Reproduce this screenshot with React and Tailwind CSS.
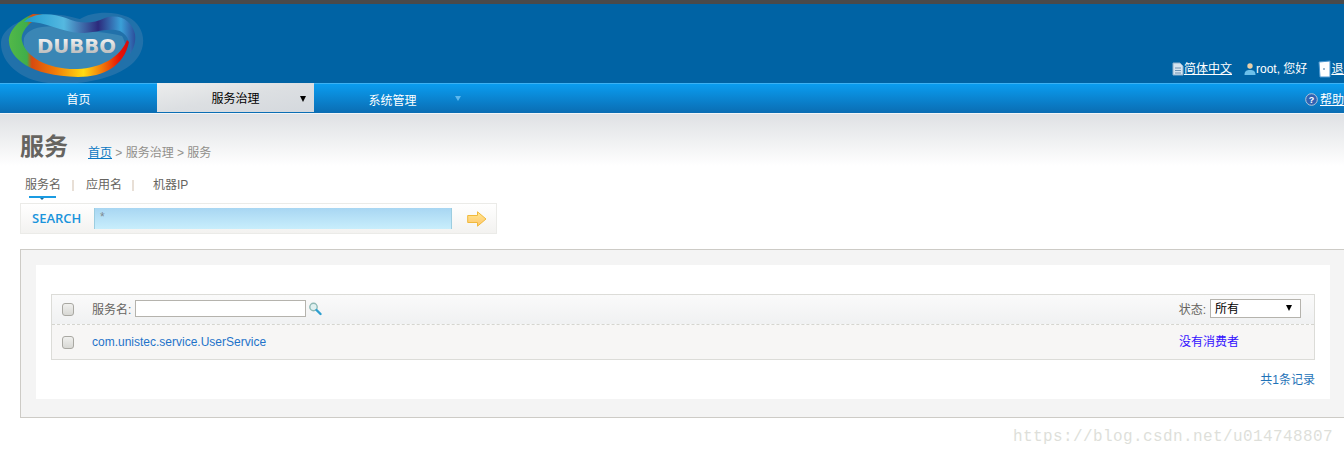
import React from 'react';

const cjk = '"Liberation Sans", "Noto Sans CJK SC", sans-serif';

const Logo = () => (
  <svg width="148" height="80" viewBox="0 0 148 80" className="absolute left-0 top-0">
    <defs>
      <linearGradient id="ring" x1="9" y1="0" x2="129" y2="0" gradientUnits="userSpaceOnUse">
        <stop offset="0" stopColor="#52b848" />
        <stop offset="0.15" stopColor="#3fae4a" />
        <stop offset="0.19" stopColor="#d84a10" />
        <stop offset="0.38" stopColor="#f07a08" />
        <stop offset="0.62" stopColor="#ffdc10" />
        <stop offset="0.8" stopColor="#f06808" />
        <stop offset="0.92" stopColor="#e81206" />
        <stop offset="1" stopColor="#d80a0a" />
      </linearGradient>
      <linearGradient id="band" x1="24" y1="0" x2="138" y2="0" gradientUnits="userSpaceOnUse">
        <stop offset="0" stopColor="#1d9ad0" />
        <stop offset="0.35" stopColor="#55b8e0" />
        <stop offset="0.65" stopColor="#2c2a7c" />
        <stop offset="0.85" stopColor="#3aa0d8" />
        <stop offset="1" stopColor="#2a3f90" />
      </linearGradient>
      <linearGradient id="word" x1="0" y1="0" x2="0" y2="1">
        <stop offset="0" stopColor="#ffffff" />
        <stop offset="1" stopColor="#b0b0b0" />
      </linearGradient>
    </defs>
    <path d="M1 38C3 22 24 14 44 11C60 9 72 13 80 15C90 8 112 6 128 13C146 22 148 44 134 58C116 76 76 82 48 79C20 76 0 58 1 38Z" fill="#2f78ad" opacity="0.7" />
    <path d="M24 34C28 22 50 20 68 24C88 28 110 28 122 32C128 42 126 52 112 60C92 68 60 70 42 62C28 56 22 44 24 34Z" fill="#3a86b5" />
    <path d="M33 10C18 16 8 28 9 38C10 54 30 72 78 73C104 73 124 62 129 38L127 36C120 54 100 64 78 65C50 66 26 54 22 37C20 28 30 16 45 11Z" fill="url(#ring)" />
    <path d="M24 18C32 9 50 8 66 14C80 20 92 20 105 14C120 9 132 17 135 30C136 38 134 44 130 50C131 40 129 32 120 27C108 23 96 29 80 29C60 28 42 16 24 18Z" fill="url(#band)" />
    <text x="37" y="49" fill="url(#word)" fontFamily="DejaVu Sans" fontWeight="700" fontSize="19" textLength="79" lengthAdjust="spacingAndGlyphs">DUBBO</text>
  </svg>
);

const DocIcon = () => (
  <svg width="12" height="14" viewBox="0 0 12 14" className="shrink-0">
    <path d="M1 1h7l3 3v9H1z" fill="#d5e3ef" stroke="#8fb1cc" />
    <path d="M3 6h6M3 8.500h6M3 11h6" stroke="#6f93b3" />
  </svg>
);

const UserIcon = () => (
  <svg width="12" height="14" viewBox="0 0 12 14" className="shrink-0">
    <circle cx="6" cy="4" r="2.700" fill="#e8cfa8" />
    <path d="M0.500 13c0-4 2-5 5.500-5s5.500 1 5.500 5z" fill="#6cc0ea" />
  </svg>
);

const ExitIcon = () => (
  <svg width="13" height="18" viewBox="0 0 13 18" className="shrink-0">
    <path d="M1 2l11-1v16H2z" fill="#ffffff" stroke="#4d97cf" />
    <circle cx="6" cy="9" r="0.800" fill="#1b5f95" />
  </svg>
);

const HelpIcon = () => (
  <svg width="13" height="13" viewBox="0 0 13 13" className="shrink-0 mr-[2px]">
    <circle cx="6.500" cy="6.500" r="5.800" fill="#2f62b4" stroke="#b6c6d8" />
    <text x="6.500" y="9.700" textAnchor="middle" fill="#fff" fontSize="9" fontWeight="700" fontFamily="Liberation Sans">?</text>
  </svg>
);

const SearchIcon = () => (
  <svg width="14" height="14" viewBox="0 0 14 14">
    <circle cx="5.500" cy="5" r="3.700" fill="#dff0f0" stroke="#8fb9b5" strokeWidth="1.400" />
    <path d="M8.500 8l4 4" stroke="#2e9fd0" strokeWidth="2.400" strokeLinecap="round" />
  </svg>
);

const ArrowIcon = () => (
  <svg width="20" height="16" viewBox="0 0 20 16">
    <defs>
      <linearGradient id="arrow" x1="0" y1="0" x2="0" y2="1">
        <stop offset="0" stopColor="#ffe98f" />
        <stop offset="1" stopColor="#ffc46e" />
      </linearGradient>
    </defs>
    <path d="M0.700 4.500h9.800V0.800L19 8l-8.500 7.200v-3.700H0.700z" fill="url(#arrow)" stroke="#f0b93c" />
  </svg>
);

const Box = ({ className = '' }) => (
  <span className={`block w-[12px] h-[13px] rounded-[3px] border border-[#a9a8a2] bg-gradient-to-b from-[#f0f0ee] to-[#d8d8d4] ${className}`} />
);

const NavItem = ({ label, children, className = '', textClass = '' }) => (
  <div className={`relative w-[157px] h-full flex items-center justify-center ${className}`}>
    <span className={`text-[12px] ${textClass}`}>{label}</span>
    {children}
  </div>
);

export default function App() {
  return (
    <div className="relative w-[1344px] h-[457px] overflow-hidden bg-white text-[12px]" style={{ fontFamily: cjk }}>
      <div className="h-[4px] bg-[#4a4a4a]" />

      {/* Header */}
      <div className="relative h-[79px] bg-[#0063a4] flex justify-end items-end pb-[5px] whitespace-nowrap text-white">
        <Logo />
        <div className="flex items-center w-[172px] shrink-0 h-[18px] overflow-hidden">
          <DocIcon />
          <a className="underline mr-[12px] shrink-0">简体中文</a>
          <UserIcon />
          <span className="mr-[11px] shrink-0">root, 您好</span>
          <ExitIcon />
          <span className="underline shrink-0">退出</span>
        </div>
      </div>

      {/* Nav */}
      <div className="relative h-[31px] flex text-white bg-gradient-to-b from-[#0a9df0] to-[#0a6db3] border-t border-t-[#3cb2f4] border-b border-b-[#f2f5f7]">
        <NavItem label="首页" textClass="mt-[2px]" />
        <NavItem label="服务治理" className="bg-gradient-to-br from-[#eceded] via-[#dcdfe2] to-[#d4d8dd] h-[30px] mt-[-1px]" textClass="text-black mt-[2px]">
          <span className="absolute right-[8px] top-[13px] w-0 h-0 border-x-[3.500px] border-x-transparent border-t-[6px] border-t-black" />
        </NavItem>
        <NavItem label="系统管理" textClass="mt-[4px]">
          <span className="absolute right-[10px] top-[12px] w-0 h-0 border-x-[3px] border-x-transparent border-t-[5px] border-t-[#5db8ee]" />
        </NavItem>
        <div className="ml-auto flex items-center w-[39px] shrink-0 overflow-hidden whitespace-nowrap pt-[2px]">
          <HelpIcon />
          <span className="underline shrink-0">帮助</span>
        </div>
      </div>

      {/* Content */}
      <div className="bg-gradient-to-b from-[#dfe1e4] to-white h-[52px] mb-[-52px]" />
      <div className="relative px-[20px]">
        <div className="flex items-end h-[49px]">
          <h1 className="text-[24px] leading-[30px] font-bold text-[#666460] mb-[1px]">服务</h1>
          <div className="ml-[20px] mb-[1px] text-[#918f8b]">
            <a className="text-[#0a78c2] underline">首页</a> &gt; 服务治理 &gt; 服务
          </div>
        </div>

        <div className="flex mt-[14px] h-[23px] text-[#666460] leading-[17px]">
          <div className="relative w-[52px] pl-[5px]">
            服务名
            <span className="absolute left-[9px] top-[19px] w-[27px] h-[2px] bg-[#1a9be2]" />
            <span className="absolute left-[20px] top-[21px] w-0 h-0 border-x-[2px] border-x-transparent border-t-[2px] border-t-[#1a6a9a]" />
          </div>
          <span className="w-[2px] h-[11px] mt-[3px] bg-[#e8dfd6]" />
          <span className="ml-[12px] w-[36px]">应用名</span>
          <span className="ml-[10px] w-[2px] h-[11px] mt-[3px] bg-[#e8dfd6]" />
          <span className="ml-[19px]">机器IP</span>
        </div>

        <div className="mt-[3px] w-[477px] h-[31px] flex items-center border border-[#ebebe8] bg-gradient-to-b from-white to-[#f3f2f0]">
          <span className="w-[73px] pl-[11px] text-[13px] font-semibold text-[#1a94dc]" style={{ fontFamily: '"Open Sans", sans-serif' }}>SEARCH</span>
          <div className="w-[358px] h-[21px] pl-[5px] text-[#7f8a90] bg-gradient-to-b from-[#a8d6f2] to-[#c8eefc] border-r border-r-[#9ccde0] border-l border-l-[#9ccde0]">*</div>
          <span className="ml-[15px] flex"><ArrowIcon /></span>
        </div>

        {/* Panel */}
        <div className="mt-[15px] w-[1326px] h-[169px] border border-[#cdcbc6] bg-[#f4f4f4] p-[15px]">
          <div className="h-[134px] bg-white px-[15px] pt-[29px]">
            <div className="border border-[#dcdcd8] h-[66px] bg-[#f7f6f5]">
              <div className="flex items-center h-[30px] border-b border-dashed border-b-[#d5d5cf] bg-gradient-to-b from-[#fafafa] to-[#f0f1f2] text-[#666460]">
                <Box className="ml-[10px]" />
                <span className="ml-[18px]">服务名:</span>
                <span className="block ml-[4px] mb-[2px] w-[171px] h-[17px] border border-[#b5b3ad] bg-white" />
                <span className="ml-[2px] mb-[2px] flex"><SearchIcon /></span>
                <span className="ml-auto">状态:</span>
                <div className="relative ml-[4px] mr-[13px] mb-[3px] w-[91px] h-[19px] border border-[#b5b3ad] bg-white text-black pl-[4px] leading-[19px]">
                  所有
                  <span className="absolute right-[8px] top-[5px] w-0 h-0 border-x-[3.500px] border-x-transparent border-t-[6px] border-t-black" />
                </div>
              </div>
              <div className="flex items-center h-[34px]">
                <Box className="ml-[10px]" />
                <span className="ml-[18px] text-[#1f73c9]">com.unistec.service.UserService</span>
                <span className="ml-auto mr-[74px] text-[#3311ff] w-[61px]">没有消费者</span>
              </div>
            </div>
            <div className="mt-[11px] text-right text-[#1f73b8]">共1条记录</div>
          </div>
        </div>
      </div>

      <div className="absolute left-[1013px] top-[427px] text-[16px] leading-[20px] tracking-[0.4px] text-[#dedfda] whitespace-nowrap" style={{ fontFamily: '"Liberation Mono", monospace' }}>
        https://blog.csdn.net/u014748807
      </div>
    </div>
  );
}
